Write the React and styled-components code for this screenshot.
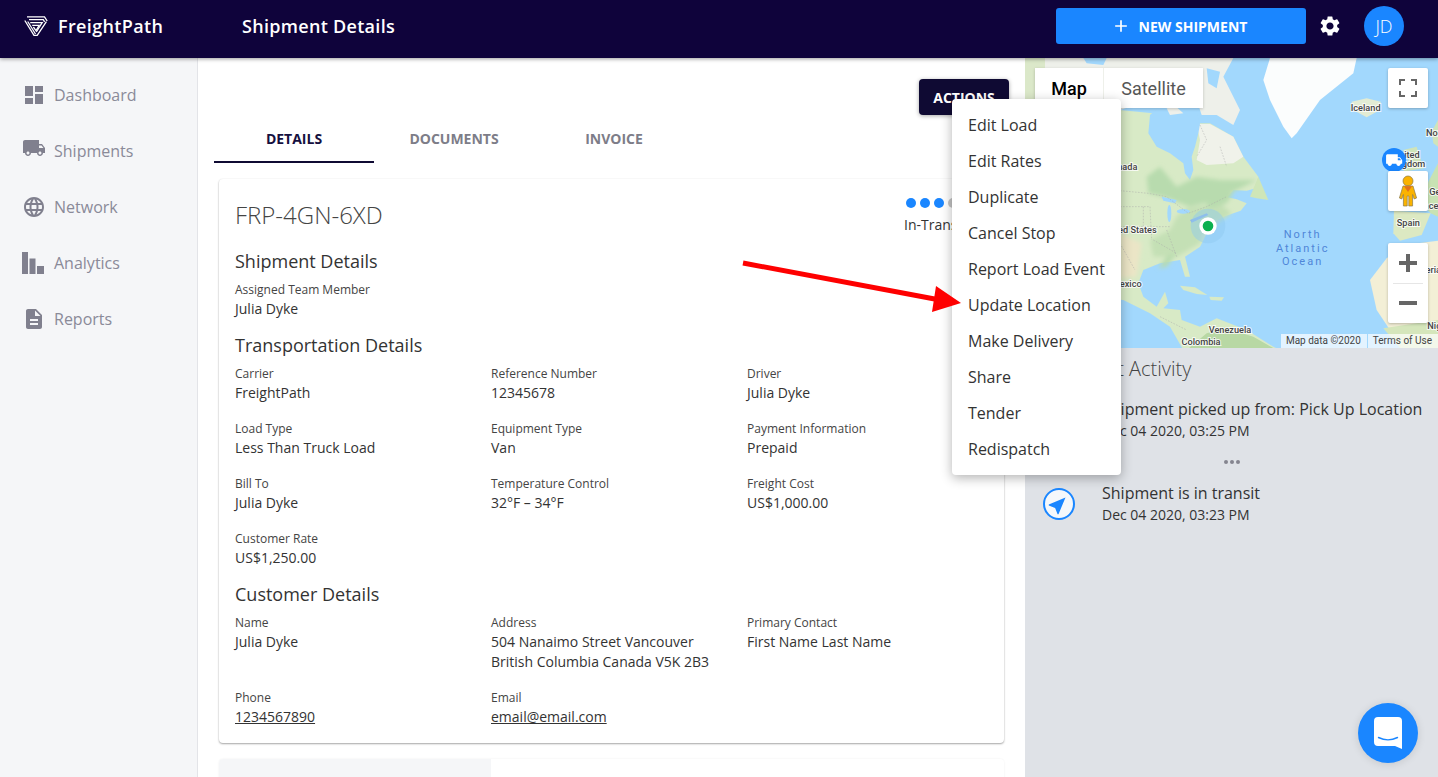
import React from "react";
import styled, { createGlobalStyle } from "styled-components";
import {
  MdDashboard,
  MdLocalShipping,
  MdLanguage,
  MdDescription,
  MdSettings,
  MdNavigation,
  MdAdd,
} from "react-icons/md";

const GlobalStyle = createGlobalStyle`
  html, body {
    margin: 0;
    height: 100%;
    overflow: hidden;
  }
  * {
    box-sizing: border-box;
  }
  body {
    font-family: "Open Sans", "Liberation Sans", sans-serif;
    color: #333;
  }
`;

const Page = styled.div`
  position: relative;
  width: 100%;
  height: 100vh;
  display: flex;
  flex-direction: column;
  overflow: hidden;
`;

const Header = styled.header`
  position: relative;
  z-index: 3;
  flex: 0 0 58px;
  display: flex;
  align-items: center;
  background: #0f033b;
  box-shadow: 0 1px 4px rgba(0, 0, 0, 0.4);
  color: #fff;
  padding: 0 34px 6px 24px;
`;

const Brand = styled.div`
  width: 218px;
  display: flex;
  align-items: center;
  gap: 10px;
  font-size: 18px;
  font-weight: 600;
  letter-spacing: 0.35px;
`;

const PageTitle = styled.div`
  flex: 1;
  font-size: 18px;
  font-weight: 600;
  letter-spacing: 0.3px;
`;

const NewButton = styled.button`
  width: 250px;
  height: 36px;
  border: 0;
  border-radius: 3px;
  background: #1a86ff;
  color: #fff;
  display: flex;
  align-items: center;
  justify-content: center;
  gap: 8px;
  padding: 0 4px 0 0;
  font-family: inherit;
  font-size: 14px;
  font-weight: 700;
`;

const Gear = styled(MdSettings)`
  margin: 0 22px 0 12px;
`;

const Avatar = styled.div`
  width: 40px;
  height: 40px;
  border-radius: 50%;
  background: #1a86ff;
  display: flex;
  align-items: center;
  justify-content: center;
  font-size: 18px;
  font-weight: 300;
`;

const Body = styled.div`
  flex: 1;
  display: flex;
  min-height: 0;
`;

const Sidebar = styled.nav`
  flex: 0 0 198px;
  background: #f5f6f8;
  border-right: 1px solid #e3e4e8;
  padding: 9px 0 0 22px;
`;

const NavItem = styled.div`
  height: 56px;
  display: flex;
  align-items: center;
  gap: 8px;
  font-size: 16px;
  color: #8a8a98;
`;

const NavIcon = styled.span`
  width: 24px;
  height: 24px;
  flex: none;
  display: flex;
  align-items: center;
  justify-content: center;
  color: #80808e;
  transform: translateY(${(p) => p.$up || 0}px);
`;

const Main = styled.main`
  position: relative;
  z-index: 2;
  flex: 0 0 827px;
  min-width: 0;
  background: #fff;
  padding: 21px 16px 0;
`;

const ActionsBar = styled.div`
  display: flex;
  justify-content: flex-end;
`;

const ActionsWrap = styled.div`
  position: relative;
`;

const ActionsButton = styled.button`
  width: 90px;
  height: 36px;
  border: 0;
  border-radius: 4px;
  background: #0f0a33;
  color: #fff;
  font-family: inherit;
  font-size: 14px;
  font-weight: 700;
  box-shadow: 0 1px 4px rgba(0, 0, 0, 0.35);
`;

const Menu = styled.ul`
  position: absolute;
  z-index: 2;
  top: 20px;
  left: 33px;
  width: 169px;
  margin: 0;
  padding: 8px 0;
  list-style: none;
  background: #fff;
  border-radius: 4px;
  box-shadow: 0 3px 12px rgba(0, 0, 0, 0.3);
`;

const MenuItem = styled.li`
  height: 36px;
  line-height: 36px;
  padding-left: 16px;
  font-size: 16px;
  color: #333;
  white-space: nowrap;
`;

const Tabs = styled.div`
  display: flex;
  height: 48px;
`;

const Tab = styled.div`
  width: 160px;
  display: flex;
  align-items: center;
  justify-content: center;
  font-size: 14px;
  font-weight: 700;
  color: ${(p) => (p.$active ? "#15103f" : "#7d7d88")};
  border-bottom: 2px solid ${(p) => (p.$active ? "#0f0a33" : "transparent")};
`;

const Card = styled.section`
  margin: 16px 5px 0;
  padding: 21px 16px 16px;
  background: #fff;
  border-radius: 4px;
  box-shadow: 0 1px 2px rgba(0, 0, 0, 0.35), 0 0 2px rgba(0, 0, 0, 0.06);
`;

const CardHead = styled.div`
  display: flex;
  justify-content: space-between;
  height: 32px;
  margin-bottom: 17px;
`;

const CardTitle = styled.h1`
  margin: 0;
  font-size: 24px;
  line-height: 30px;
  font-weight: 300;
  color: #444;
`;

const Status = styled.div`
  width: 70px;
  margin-right: 14px;
  display: flex;
  flex-direction: column;
  align-items: flex-start;
  font-size: 14px;
  line-height: 20px;
`;

const Dots = styled.div`
  display: flex;
  gap: 4px;
  margin: -2px 0 7px 2px;
`;

const Dot = styled.i`
  width: 10px;
  height: 10px;
  border-radius: 50%;
  background: ${(p) => (p.$on ? "#1a86ff" : "#c4c4c4")};
`;

const SectionTitle = styled.h2`
  margin: 0 0 8px;
  font-size: 18px;
  line-height: 24px;
  font-weight: 400;
  color: #333;
`;

const FieldGrid = styled.div`
  display: grid;
  grid-template-columns: 256px 256px 1fr;
  row-gap: 17px;
  margin-bottom: 14px;

  &:last-child {
    margin-bottom: 0;
  }
`;

const Field = styled.div`
  min-width: 0;
`;

const Label = styled.div`
  font-size: 12px;
  line-height: 16px;
  padding-top: 1px;
  margin-bottom: 1px;
  color: #444;
`;

const Value = styled.div`
  font-size: 14px;
  line-height: 20px;
  color: #333;
  text-decoration: ${(p) => (p.$link ? "underline" : "none")};
`;

const NextCard = styled.div`
  margin: 16px 5px 0;
  height: 60px;
  border-radius: 4px;
  background: linear-gradient(90deg, #f5f6f8 272px, #fff 272px);
  box-shadow: 0 0 2px rgba(0, 0, 0, 0.08);
`;

const Side = styled.aside`
  flex: 1;
  background: #dfe2e7;
  min-width: 0;
`;

const MapBox = styled.div`
  position: relative;
  height: 290px;
  overflow: hidden;
  background: #a2d8fd;
  font-family: Roboto, "Liberation Sans", sans-serif;
`;

const MapArt = styled.svg`
  display: block;
  width: 413px;
  height: 290px;
`;

const MapLabel = styled.text`
  font-family: Roboto, "Liberation Sans", sans-serif;
  font-size: 27.5px;
  font-weight: 500;
  fill: #444;
  stroke: rgba(255, 255, 255, 0.8);
  stroke-width: 6px;
  paint-order: stroke;
  text-anchor: ${(p) => p.$anchor || "start"};
`;

const OceanLabel = styled.text`
  font-family: Roboto, "Liberation Sans", sans-serif;
  font-size: 33px;
  letter-spacing: 6px;
  fill: #4f86d8;
  text-anchor: middle;
`;

const MapTypes = styled.div`
  position: absolute;
  top: 10px;
  left: 10px;
  display: flex;
  gap: 1px;
  height: 40px;
  font-size: 18px;
  box-shadow: 0 1px 3px rgba(0, 0, 0, 0.2);
`;

const MapType = styled.div`
  width: ${(p) => (p.$active ? "68px" : "99px")};
  display: flex;
  align-items: center;
  justify-content: center;
  background: #fff;
  color: ${(p) => (p.$active ? "#000" : "#565656")};
  font-weight: ${(p) => (p.$active ? 500 : 400)};
`;

const MapControl = styled.div`
  position: absolute;
  right: 10px;
  top: ${(p) => p.$top}px;
  width: 40px;
  height: ${(p) => p.$h || 40}px;
  background: #fff;
  border-radius: 2px;
  display: flex;
  align-items: center;
  justify-content: center;
  box-shadow: 0 1px 3px rgba(0, 0, 0, 0.25);
`;

const ZoomControl = styled(MapControl)`
  flex-direction: column;
  justify-content: space-around;

  &::after {
    content: "";
    position: absolute;
    top: 40px;
    left: 5px;
    right: 5px;
    height: 1px;
    background: #e6e6e6;
  }
`;

const Attribution = styled.div`
  position: absolute;
  right: 0;
  bottom: 0;
  height: 14px;
  display: flex;
  gap: 1px;
  font-size: 10px;
  line-height: 14px;
  color: #444;
`;

const AttrItem = styled.span`
  padding: 0 6px 0 5px;
  background: rgba(255, 255, 255, 0.7);
  white-space: nowrap;
`;

const Activity = styled.div`
  padding: 9px 16px 0 16px;
`;

const ActivityTitle = styled.h3`
  margin: 0 0 17px 21px;
  font-size: 20px;
  line-height: 24px;
  font-weight: 300;
  color: #444;
`;

const Event = styled.div`
  display: flex;
  align-items: center;
  gap: 27px;
  height: 44px;
`;

const EventIcon = styled.div`
  width: 32px;
  height: 32px;
  margin-left: 2px;
  flex: none;
  border-radius: 50%;
  border: 2px solid #1a86ff;
  background: #f5f8fb;
  color: #1a86ff;
  display: flex;
  align-items: center;
  justify-content: center;

  svg {
    transform: rotate(45deg);
  }
`;

const EventTitle = styled.div`
  font-size: 16px;
  line-height: 22px;
  white-space: nowrap;
  color: #333;
`;

const EventDate = styled.div`
  font-size: 14px;
  line-height: 22px;
  color: #333;
`;

const More = styled.div`
  height: 40px;
  display: flex;
  align-items: center;
  justify-content: center;
  gap: 2px;
`;

const MoreDot = styled.i`
  width: 4px;
  height: 4px;
  border-radius: 50%;
  background: #85858f;
`;

const ChatBubble = styled.div`
  position: absolute;
  right: 20px;
  bottom: 14px;
  width: 60px;
  height: 60px;
  border-radius: 50%;
  background: #1a86ff;
  display: flex;
  align-items: center;
  justify-content: center;
  box-shadow: 0 1px 8px rgba(0, 0, 0, 0.12);
`;

const ArrowArt = styled.svg`
  position: absolute;
  z-index: 4;
  left: 740px;
  top: 255px;
  width: 225px;
  height: 60px;
`;

const Logo = () => (
  <svg width="24" height="20" viewBox="0 0 24 20" fill="none" stroke="#fff" strokeWidth="1.3">
    <path d="M3 .8H20.5L23.2 5" />
    <path d="M5 3.6H19.3L20.6 5.8" />
    <path d="M.8 4.5L10 19.4H13.2L22.4 5.6" />
    <path d="M3.7 5.5L11.5 18" />
    <path d="M12.3 16L18.2 6.6H6.2" />
    <path d="M8.2 9.4H15.2L12 14.6 9.4 11" />
  </svg>
);

const BarsIcon = () => (
  <svg width="24" height="24" viewBox="0 0 24 24" fill="currentColor">
    <rect x="0" y="1" width="6" height="22" />
    <rect x="7.5" y="7.5" width="6" height="15.5" />
    <rect x="15" y="15" width="7" height="8" />
  </svg>
);

const Pegman = () => (
  <svg width="18" height="32" viewBox="0 0 18 32">
    <g fill="#fab300" stroke="#8a7a4a" strokeWidth="0.7">
      <circle cx="9" cy="6" r="5" />
      <path d="M4 11h10l3.6 12-2.4 1-1.6-4.5V31h-3.8V21H8.200v10H4.400V19.500L2.800 24 .4 23z" />
    </g>
    <path d="M5 11.2L9 17l4-5.800z" fill="#e2711d" />
  </svg>
);

const ChatIcon = () => (
  <svg width="28" height="32" viewBox="0 0 28 32">
    <path d="M4 0h20a4 4 0 0 1 4 4v28l-7-3H4a4 4 0 0 1-4-4V4a4 4 0 0 1 4-4z" fill="#fff" />
    <path d="M4.5 20.500c6 3 13 3 19 0" fill="none" stroke="#1a86ff" strokeWidth="1.4" strokeLinecap="round" />
  </svg>
);

const pts = (list) => list.map((p) => p.join(",")).join(" ");

const ocean = "#a2d8fd";

const northAmerica = [
  [15, 300], [300, 330], [450, 345], [485, 360], [530, 370], [570, 370], [640, 410], [670, 470],
  [715, 530], [708, 565], [680, 572], [640, 570], [622, 592], [650, 598], [680, 610], [662, 632],
  [610, 650], [575, 668], [555, 710], [540, 740], [495, 770], [510, 830], [495, 830], [480, 780],
  [420, 790], [370, 810], [355, 850], [370, 890], [410, 920], [435, 875], [445, 910], [430, 925],
  [480, 930], [485, 960], [540, 980], [590, 955], [680, 990], [760, 1040], [780, 1050], [490, 1050],
  [450, 980], [390, 940], [310, 900], [15, 880],
];
const arctic = [
  [15, 174], [640, 174], [610, 230], [660, 330], [640, 375], [590, 345], [545, 345], [530, 300],
  [390, 300], [300, 330], [15, 330],
];
const hudson = [
  [385, 400], [390, 345], [430, 310], [525, 310], [540, 372], [535, 400], [525, 440], [515, 470],
  [520, 510], [510, 540], [495, 520], [490, 490], [450, 460], [410, 440],
];
const quebec = [
  [530, 372], [570, 372], [640, 410], [670, 470], [640, 490], [560, 495], [530, 480], [540, 420],
];
const forest = [
  [380, 530], [420, 500], [470, 560], [530, 530], [600, 540], [710, 540], [650, 570], [590, 600],
  [510, 620], [430, 590], [385, 580],
];
const eastUs = [
  [500, 625], [600, 610], [635, 640], [590, 670], [550, 700], [540, 730], [470, 770], [400, 770],
  [390, 720], [450, 690], [470, 650],
];
const southAmerica = [[560, 1000], [620, 985], [700, 1010], [770, 1050], [500, 1050]];
const greenland = [
  [750, 174], [1010, 174], [1000, 220], [900, 300], [830, 400], [815, 415], [790, 380], [750, 300],
  [730, 240],
];
const iceland = [[995, 305], [1040, 295], [1082, 305], [1080, 330], [1040, 352], [1000, 330]];
const iberia = [[1122, 632], [1232, 640], [1205, 705], [1140, 722], [1120, 700]];
const europe = [[1215, 620], [1225, 545], [1254, 490], [1254, 650], [1232, 640]];
const britain = [[1150, 450], [1190, 440], [1210, 505], [1150, 515], [1165, 480]];
const nordic = [[1235, 395], [1254, 360], [1254, 440], [1240, 430]];
const africa = [
  [1050, 840], [1100, 775], [1150, 735], [1254, 722], [1254, 1044], [1120, 1005], [1070, 930],
];
const sahel = [[1090, 985], [1254, 960], [1254, 1044], [1140, 1044]];

const MapPicture = () => (
  <MapArt viewBox="15 174 1239 870">
    <defs>
      <filter id="soft">
        <feGaussianBlur stdDeviation="1.6" />
      </filter>
      <filter id="softer">
        <feGaussianBlur stdDeviation="6" />
      </filter>
    </defs>
    <rect x="15" y="174" width="1239" height="870" fill={ocean} />
    <g filter="url(#soft)">
      <polygon points={pts(arctic)} fill="#eef0ea" />
      <rect x="15" y="174" width="60" height="130" fill="#dbe8c9" />
      <polygon points="190,174 260,174 250,195 200,190" fill={ocean} />
      <polygon points="560,205 600,215 590,265 565,250" fill={ocean} />
      <polygon points={pts(northAmerica)} fill="#d8eac6" />
      <polygon points={pts(quebec)} fill="#f0f2ea" />
      <polygon points={pts(hudson)} fill={ocean} />
      <polygon points="440,325 470,322 490,340 450,345" fill="#eef0ea" />
    </g>
    <g filter="url(#softer)">
      <polygon points={pts(forest)} fill="#b8dbae" />
      <polygon points={pts(eastUs)} fill="#c4e0b5" />
      <polygon points="300,700 365,730 350,830 300,835" fill="#ebe5c6" />
      <polygon points="545,590 640,580 620,610 570,625" fill="#b8dbae" />
      <polygon points="415,805 440,770 470,760 440,800" fill="#b8dbae" />
    </g>
    <g filter="url(#soft)">
      <ellipse cx="448" cy="640" rx="6" ry="26" fill={ocean} />
      <ellipse cx="490" cy="634" rx="20" ry="7" fill={ocean} />
      <polygon points="425,590 470,600 465,610 430,602" fill={ocean} />
      <polygon points="510,660 560,640 565,645 515,668" fill="#8fb6e8" />
      <polygon points="690,590 715,530 745,600 710,595" fill="#cfe6b8" />
      <polygon points="480,857 525,862 562,885 530,882 490,870" fill="#d8eac6" />
      <polygon points="568,890 612,892 605,902 572,900" fill="#d8eac6" />
      <polygon points={pts(southAmerica)} fill="#b8d8a4" />
      <polygon points={pts(greenland)} fill="#fbfdfd" />
      <polygon points={pts(iceland)} fill="#e3ecd4" />
      <polygon points={pts(nordic)} fill="#cfe4ba" />
      <polygon points={pts(britain)} fill="#cfe4ba" />
      <polygon points={pts(europe)} fill="#c8e2b3" />
      <polygon points={pts(iberia)} fill="#dce9c2" />
      <polygon points={pts(africa)} fill="#f3efd6" />
      <polygon points={pts(sahel)} fill="#d5e6bb" />
    </g>
    <g fill="none" stroke="#a8a8a8" strokeWidth="1.4" strokeDasharray="5 4">
      <path d="M300 572L385 580 440 590 505 640 560 620 620 590" />
      <path d="M540 375L560 420 530 470M600 440L620 500M300 620H390L395 720M300 680H450M400 720L470 760" />
      <path d="M300 730L345 810M370 620V700M440 690L470 770M420 950L500 990" />
    </g>
    <circle cx="564" cy="678" r="52" fill="#8fc9f0" opacity="0.45" />
    <circle cx="564" cy="678" r="26" fill="#fff" />
    <circle cx="564" cy="678" r="16" fill="#0bb04f" />
    <MapLabel x="352" y="511" $anchor="end">Canada</MapLabel>
    <MapLabel x="410" y="700" $anchor="end">United States</MapLabel>
    <MapLabel x="365" y="860" $anchor="end">Mexico</MapLabel>
    <MapLabel x="630" y="1000" $anchor="middle">Venezuela</MapLabel>
    <MapLabel x="543" y="1036" $anchor="middle">Colombia</MapLabel>
    <MapLabel x="1037" y="334" $anchor="middle">Iceland</MapLabel>
    <MapLabel x="1199" y="475" $anchor="end">United</MapLabel>
    <MapLabel x="1216" y="502" $anchor="end">Kingdom</MapLabel>
    <MapLabel x="1218" y="409">Norway</MapLabel>
    <MapLabel x="1228" y="584">Germany</MapLabel>
    <MapLabel x="1165" y="677" $anchor="middle">Spain</MapLabel>
    <MapLabel x="1172" y="626">France</MapLabel>
    <MapLabel x="1176" y="820">Algeria</MapLabel>
    <MapLabel x="1222" y="988">Niger</MapLabel>
    <OceanLabel x="848" y="713">North</OceanLabel>
    <OceanLabel x="848" y="755">Atlantic</OceanLabel>
    <OceanLabel x="848" y="795">Ocean</OceanLabel>
    <circle cx="1122" cy="480" r="36" fill="#1a86ff" />
    <g transform="translate(1096 454) scale(2.2)" fill="#fff">
      <path d="M20 8h-3V4H3c-1.100 0-2 .9-2 2v11h2c0 1.660 1.340 3 3 3s3-1.340 3-3h6c0 1.660 1.340 3 3 3s3-1.340 3-3h2v-5l-3-4zM19.500 9.500l1.960 2.500H17V9.500h2.500z" fillRule="evenodd" />
    </g>
  </MapArt>
);

const FullscreenIcon = () => (
  <svg width="18" height="18" viewBox="0 0 18 18" fill="none" stroke="#666" strokeWidth="2">
    <path d="M1 6V1h5M12 1h5v5M17 12v5h-5M6 17H1v-5" />
  </svg>
);

const ZoomSign = ({ plus }) => (
  <svg width="18" height="18" viewBox="0 0 18 18" fill="#666">
    <rect x="0" y="7" width="18" height="4" />
    {plus && <rect x="7" y="0" width="4" height="18" />}
  </svg>
);

const menuItems = [
  "Edit Load",
  "Edit Rates",
  "Duplicate",
  "Cancel Stop",
  "Report Load Event",
  "Update Location",
  "Make Delivery",
  "Share",
  "Tender",
  "Redispatch",
];

const transport = [
  ["Carrier", "FreightPath"],
  ["Reference Number", "12345678"],
  ["Driver", "Julia Dyke"],
  ["Load Type", "Less Than Truck Load"],
  ["Equipment Type", "Van"],
  ["Payment Information", "Prepaid"],
  ["Bill To", "Julia Dyke"],
  ["Temperature Control", "32°F – 34°F"],
  ["Freight Cost", "US$1,000.00"],
  ["Customer Rate", "US$1,250.00"],
];

export default function App() {
  return (
    <Page>
      <GlobalStyle />
      <Header>
        <Brand>
          <Logo />
          FreightPath
        </Brand>
        <PageTitle>Shipment Details</PageTitle>
        <NewButton>
          <MdAdd size={20} />
          <span>NEW SHIPMENT</span>
        </NewButton>
        <Gear size={24} />
        <Avatar>JD</Avatar>
      </Header>
      <Body>
        <Sidebar>
          <NavItem>
            <NavIcon><MdDashboard size={24} /></NavIcon>
            Dashboard
          </NavItem>
          <NavItem>
            <NavIcon $up={-3}><MdLocalShipping size={26} /></NavIcon>
            Shipments
          </NavItem>
          <NavItem>
            <NavIcon><MdLanguage size={24} /></NavIcon>
            Network
          </NavItem>
          <NavItem>
            <NavIcon><BarsIcon /></NavIcon>
            Analytics
          </NavItem>
          <NavItem>
            <NavIcon><MdDescription size={24} /></NavIcon>
            Reports
          </NavItem>
        </Sidebar>
        <Main>
          <ActionsBar>
            <ActionsWrap>
              <ActionsButton>ACTIONS</ActionsButton>
              <Menu>
                {menuItems.map((item) => (
                  <MenuItem key={item}>{item}</MenuItem>
                ))}
              </Menu>
            </ActionsWrap>
          </ActionsBar>
          <Tabs>
            <Tab $active>DETAILS</Tab>
            <Tab>DOCUMENTS</Tab>
            <Tab>INVOICE</Tab>
          </Tabs>
          <Card>
            <CardHead>
              <CardTitle>FRP-4GN-6XD</CardTitle>
              <Status>
                <Dots>
                  <Dot $on />
                  <Dot $on />
                  <Dot $on />
                  <Dot />
                  <Dot />
                </Dots>
                In-Transit
              </Status>
            </CardHead>
            <SectionTitle>Shipment Details</SectionTitle>
            <FieldGrid>
              <Field>
                <Label>Assigned Team Member</Label>
                <Value>Julia Dyke</Value>
              </Field>
            </FieldGrid>
            <SectionTitle>Transportation Details</SectionTitle>
            <FieldGrid>
              {transport.map(([label, value]) => (
                <Field key={label}>
                  <Label>{label}</Label>
                  <Value>{value}</Value>
                </Field>
              ))}
            </FieldGrid>
            <SectionTitle>Customer Details</SectionTitle>
            <FieldGrid>
              <Field>
                <Label>Name</Label>
                <Value>Julia Dyke</Value>
              </Field>
              <Field>
                <Label>Address</Label>
                <Value>504 Nanaimo Street Vancouver</Value>
                <Value>British Columbia Canada V5K 2B3</Value>
              </Field>
              <Field>
                <Label>Primary Contact</Label>
                <Value>First Name Last Name</Value>
              </Field>
              <Field>
                <Label>Phone</Label>
                <Value $link>1234567890</Value>
              </Field>
              <Field>
                <Label>Email</Label>
                <Value $link>email@email.com</Value>
              </Field>
            </FieldGrid>
          </Card>
          <NextCard />
        </Main>
        <Side>
          <MapBox>
            <MapPicture />
            <MapTypes>
              <MapType $active>Map</MapType>
              <MapType>Satellite</MapType>
            </MapTypes>
            <MapControl $top={10}><FullscreenIcon /></MapControl>
            <MapControl $top={113}><Pegman /></MapControl>
            <ZoomControl $top={185} $h={80}>
              <ZoomSign plus />
              <ZoomSign />
            </ZoomControl>
            <Attribution>
              <AttrItem>Map data ©2020</AttrItem>
              <AttrItem>Terms of Use</AttrItem>
            </Attribution>
          </MapBox>
          <Activity>
            <ActivityTitle>Recent Activity</ActivityTitle>
            <Event>
              <EventIcon><MdNavigation size={22} /></EventIcon>
              <div>
                <EventTitle>Shipment picked up from: Pick Up Location</EventTitle>
                <EventDate>Dec 04 2020, 03:25 PM</EventDate>
              </div>
            </Event>
            <More>
              <MoreDot />
              <MoreDot />
              <MoreDot />
            </More>
            <Event>
              <EventIcon><MdNavigation size={22} /></EventIcon>
              <div>
                <EventTitle>Shipment is in transit</EventTitle>
                <EventDate>Dec 04 2020, 03:23 PM</EventDate>
              </div>
            </Event>
          </Activity>
        </Side>
      </Body>
      <ArrowArt viewBox="740 255 225 60">
        <line x1="743" y1="263" x2="940" y2="300" stroke="#fe0000" strokeWidth="5" />
        <polygon points="936,286 961,303 932,312" fill="#fe0000" />
      </ArrowArt>
      <ChatBubble><ChatIcon /></ChatBubble>
    </Page>
  );
}
